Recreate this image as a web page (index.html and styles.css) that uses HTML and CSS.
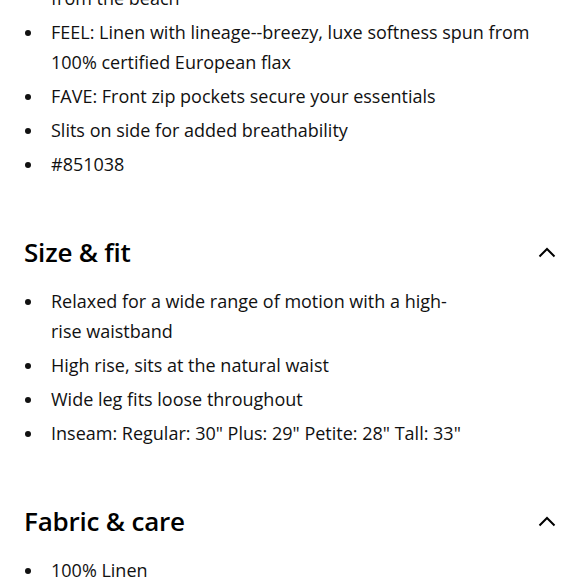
FILE: index.html
```html
<!DOCTYPE html>
<html>
<head>
<meta charset="utf-8">
<link rel="stylesheet" href="styles.css">
</head>
<body>
<div class="page">
  <ul class="bullets first">
    <li>FUNCTION: Breezy wide legs take you to and<br>from the beach</li>
    <li>FEEL: Linen with lineage--breezy, luxe softness spun from 100% certified European flax</li>
    <li>FAVE: Front zip pockets secure your essentials</li>
    <li>Slits on side for added breathability</li>
    <li>#851038</li>
  </ul>

  <section class="section">
    <div class="section-head">
      <h2>Size &amp; fit</h2>
      <svg class="chev" width="18" height="11" viewBox="0 0 18 11"><path d="M1.5 9.5 L9 2 L16.5 9.5" fill="none" stroke="#000" stroke-width="2"/></svg>
    </div>
    <ul class="bullets">
      <li class="narrow">Relaxed for a wide range of motion with a high-rise waistband</li>
      <li>High rise, sits at the natural waist</li>
      <li>Wide leg fits loose throughout</li>
      <li>Inseam: Regular: 30" Plus: 29" Petite: 28" Tall: 33"</li>
    </ul>
  </section>

  <section class="section">
    <div class="section-head">
      <h2>Fabric &amp; care</h2>
      <svg class="chev" width="18" height="11" viewBox="0 0 18 11"><path d="M1.5 9.5 L9 2 L16.5 9.5" fill="none" stroke="#000" stroke-width="2"/></svg>
    </div>
    <ul class="bullets">
      <li>100% Linen</li>
      <li>Machine wash cold</li>
    </ul>
  </section>
</div>
</body>
</html>
```
FILE: styles.css
```css
html, body {
  margin: 0;
  padding: 0;
  background: #fff;
}
body {
  font-family: "Open Sans", "Liberation Sans", sans-serif;
  color: #111;
  overflow: hidden;
}
.page {
  padding: 0 24px;
  margin-top: -47px;
}
.bullets {
  list-style: none;
  margin: 0;
  padding: 0;
  display: flex;
  flex-direction: column;
  gap: 4px;
}
.bullets li {
  position: relative;
  padding-left: 27px;
  font-size: 18px;
  line-height: 30px;
  max-width: 490px;
}
.bullets li::before {
  content: "";
  position: absolute;
  left: 1px;
  top: 13px;
  width: 6px;
  height: 6px;
  border-radius: 50%;
  background: #111;
}
.bullets li.narrow {
  max-width: 408px;
}
.section {
  margin-top: 56px;
}
.section-head {
  display: flex;
  justify-content: space-between;
  align-items: center;
  height: 34px;
  margin-bottom: 17px;
}
.section-head h2 {
  margin: 0;
  font-size: 26px;
  font-weight: 600;
  line-height: 34px;
  color: #000;
  letter-spacing: -0.2px;
}
.chev {
  display: block;
  margin-right: 0;
}
```
